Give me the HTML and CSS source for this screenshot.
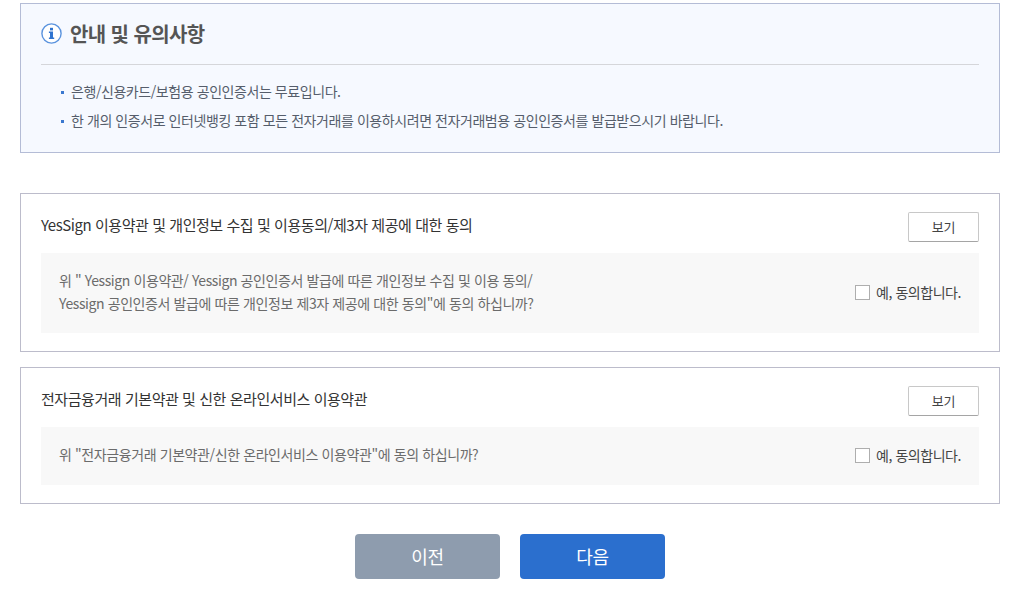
FILE: index.html
```html
<!DOCTYPE html>
<html lang="ko">
<head>
<meta charset="utf-8">
<title>안내 및 유의사항</title>
<link rel="stylesheet" href="styles.css">
</head>
<body>
<main class="page">
  <section class="notice">
    <h2 class="notice-title">
      <svg class="info-icon" width="21" height="21" viewBox="0 0 21 21" aria-hidden="true">
        <circle cx="10.5" cy="10.5" r="9.6" fill="#fff" stroke="#5a93de" stroke-width="1.4"/>
        <rect x="9" y="4.8" width="3" height="2.6" fill="#2f74d0"/>
        <path d="M7.9 8.6h4.1v6h1.2v1.5H7.9v-1.5H9v-4.5H7.9z" fill="#2f74d0"/>
      </svg>
      안내 및 유의사항
    </h2>
    <ul class="notice-list">
      <li>은행/신용카드/보험용 공인인증서는 무료입니다.</li>
      <li>한 개의 인증서로 인터넷뱅킹 포함 모든 전자거래를 이용하시려면 전자거래범용 공인인증서를 발급받으시기 바랍니다.</li>
    </ul>
  </section>

  <section class="agree agree-first">
    <div class="agree-head">
      <h3 class="agree-title">YesSign 이용약관 및 개인정보 수집 및 이용동의/제3자 제공에 대한 동의</h3>
      <button class="view-btn" type="button">보기</button>
    </div>
    <div class="agree-body agree-body-tall">
      <p class="agree-text">위 " Yessign 이용약관/ Yessign 공인인증서 발급에 따른 개인정보 수집 및 이용 동의/<br>Yessign 공인인증서 발급에 따른 개인정보 제3자 제공에 대한 동의"에 동의 하십니까?</p>
      <label class="check"><span class="check-box"></span>예, 동의합니다.</label>
    </div>
  </section>

  <section class="agree agree-second">
    <div class="agree-head">
      <h3 class="agree-title">전자금융거래 기본약관 및 신한 온라인서비스 이용약관</h3>
      <button class="view-btn" type="button">보기</button>
    </div>
    <div class="agree-body agree-body-short">
      <p class="agree-text">위 "전자금융거래 기본약관/신한 온라인서비스 이용약관"에 동의 하십니까?</p>
      <label class="check"><span class="check-box"></span>예, 동의합니다.</label>
    </div>
  </section>

  <div class="actions">
    <button class="action action-prev" type="button">이전</button>
    <button class="action action-next" type="button">다음</button>
  </div>
</main>
</body>
</html>
```

FILE: styles.css
```css
* { box-sizing: border-box; }
html, body { margin: 0; padding: 0; background: #fff; }
body {
  font-family: "Noto Sans CJK KR", "Noto Sans", sans-serif;
  color: #333;
  overflow: hidden;
}
.page { width: 980px; margin-left: 20px; padding-top: 3px; }

.notice {
  height: 150px;
  background: #f6f9ff;
  border: 1px solid #b4bcd6;
  padding: 0 20px;
}
.notice-title {
  display: flex;
  align-items: center;
  gap: 8px;
  height: 61px;
  padding-bottom: 2px;
  margin: 0;
  border-bottom: 1px solid #d5d6da;
  font-size: 20px;
  font-weight: 700;
  letter-spacing: -0.6px;
  color: #555;
}
.info-icon { flex: none; margin-top: 1px; }
.notice-list { list-style: none; margin: 0; padding: 12px 0 0 30px; }
.notice-list li {
  position: relative;
  height: 29px;
  line-height: 28px;
  font-size: 14px;
  letter-spacing: -0.43px;
  color: #555d6b;
}
.notice-list li::before {
  content: "";
  position: absolute;
  left: -10px;
  top: 14px;
  width: 3px;
  height: 3px;
  background: #3a78cf;
}

.agree { border: 1px solid #bcbccb; padding: 0 20px; }
.agree-first { margin-top: 40px; height: 159px; }
.agree-second { margin-top: 15px; height: 137px; }
.agree-head {
  display: flex;
  align-items: flex-start;
  justify-content: space-between;
  height: 59px;
  padding-top: 18px;
}
.agree-title {
  margin: 0;
  font-size: 15px;
  line-height: 26px;
  font-weight: 400;
  letter-spacing: -0.44px;
  color: #333;
}
.view-btn {
  width: 71px;
  height: 30px;
  padding: 0 0 2px;
  background: #fff;
  border: 1px solid #c8c8c8;
  border-bottom-color: #a5a5a5;
  border-radius: 2px;
  font: inherit;
  font-size: 13px;
  letter-spacing: -0.3px;
  color: #444;
}
.agree-body {
  display: flex;
  align-items: center;
  justify-content: space-between;
  background: #f8f8f8;
  padding: 0 18px;
}
.agree-body-tall { height: 80px; }
.agree-body-short { height: 58px; }
.agree-text {
  margin: -3px 0 0;
  font-size: 14px;
  line-height: 23px;
  letter-spacing: -0.4px;
  color: #6b6b6b;
}
.check {
  display: flex;
  align-items: center;
  gap: 6px;
  margin-top: -2px;
  font-size: 14px;
  letter-spacing: -0.45px;
  color: #444;
}
.check-box {
  width: 15px;
  height: 15px;
  background: #fff;
  border: 1px solid #aeaeae;
}

.actions { display: flex; justify-content: center; gap: 20px; margin-top: 30px; }
.action {
  width: 145px;
  height: 45px;
  padding: 0 0 2px;
  border: 0;
  border-radius: 4px;
  font: inherit;
  font-size: 18px;
  font-weight: 400;
  letter-spacing: -0.3px;
  color: #fff;
}
.action-prev { background: #8e9cae; }
.action-next { background: #2b6fce; }
```
